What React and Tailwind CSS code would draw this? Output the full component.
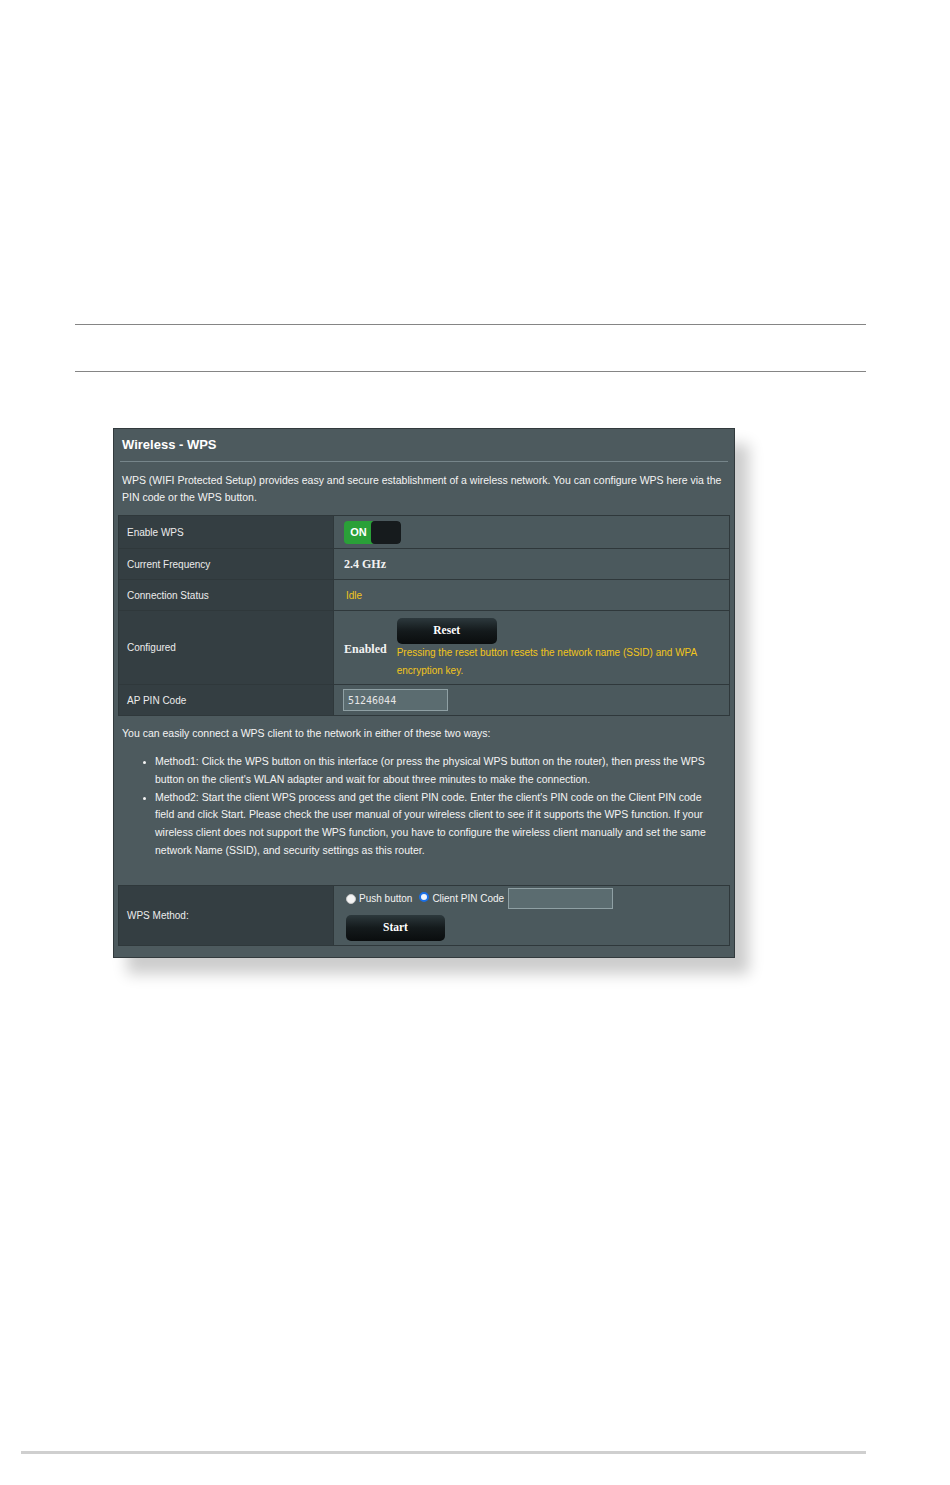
import React from 'react';

const serif = "font-['Liberation_Serif','Times_New_Roman',serif]";

function Row({ label, height, children }) {
  return (
    <div className="flex border-b border-[#2f383b] last:border-b-0" style={{ height }}>
      <div className="w-[214px] shrink-0 bg-[#343e42] pl-[8px] flex items-center text-[10px] text-[#ececec]">
        {label}
      </div>
      <div className="flex-1 bg-[#4b595d] border-l border-[#2f383b] pl-[10px] flex items-center">
        {children}
      </div>
    </div>
  );
}

function DarkButton({ children, className = '' }) {
  return (
    <div
      className={`h-[26px] rounded-[5px] bg-gradient-to-b from-[#2d393d] via-[#141a1c] to-[#0a0d0e] flex items-center justify-center text-white text-[11.5px] font-bold ${serif} ${className}`}
    >
      {children}
    </div>
  );
}

function Radio({ checked }) {
  return checked ? (
    <span className="inline-block w-[10px] h-[10px] rounded-full border-[2px] border-[#1a6fe6] bg-[#eef3fb]" />
  ) : (
    <span className="inline-block w-[10px] h-[10px] rounded-full bg-[#f4f4f4] border border-[#c8c8c8]" />
  );
}

export default function App() {
  return (
    <div className="w-[950px] h-[1485px] bg-white font-['Liberation_Sans',Arial,sans-serif] overflow-hidden">
      <div className="pt-[324px]">
        <div className="ml-[75px] w-[791px] h-px bg-[#858585]" />
        <div className="mt-[46px] ml-[75px] w-[791px] h-px bg-[#858585]" />
      </div>

      {/* WPS settings panel */}
      <div className="mt-[56px] ml-[113px] w-[622px] h-[530px] bg-[#4d5a5e] border border-[#323a3d] shadow-[14px_16px_14px_rgba(0,0,0,0.2)] flex flex-col">
        <div className="h-[32px] pl-[8px] flex items-center text-[13px] font-bold text-white">
          Wireless - WPS
        </div>
        <div className="mx-[6px] h-px bg-[#76858a]" />
        <p className="pt-[10px] pl-[8px] pr-[4px] text-[10.5px] leading-[17px] text-[#f4f4f4]">
          WPS (WIFI Protected Setup) provides easy and secure establishment of a wireless network. You can configure WPS here via the PIN code or the WPS button.
        </p>

        <div className="mt-[9px] mx-[4px] border border-[#2f383b]">
          <Row label="Enable WPS" height={33}>
            <div className="flex h-[23px] w-[57px] rounded-[4px] overflow-hidden">
              <div className="w-[29px] bg-[#2aa038] flex items-center justify-center text-white text-[11px] font-bold">
                ON
              </div>
              <div className="flex-1 bg-[#161b1d] rounded-[4px] -ml-[2px]" />
            </div>
          </Row>
          <Row label="Current Frequency" height={31}>
            <span className={`text-[12px] font-bold text-[#f2f2f2] ${serif}`}>2.4 GHz</span>
          </Row>
          <Row label="Connection Status" height={31}>
            <span className="pl-[2px] text-[10px] text-[#f2c51c]">Idle</span>
          </Row>
          <Row label="Configured" height={74}>
            <div className="flex items-center pt-[2px]">
              <span className={`text-[12px] font-bold text-[#f2f2f2] ${serif}`}>Enabled</span>
              <div className="ml-[10px] flex flex-col">
                <DarkButton className="w-[100px]">Reset</DarkButton>
                <p className="text-[10px] leading-[18px] text-[#f2c51c]">
                  Pressing the reset button resets the network name (SSID) and WPA
                  <br />
                  encryption key.
                </p>
              </div>
            </div>
          </Row>
          <Row label="AP PIN Code" height={30}>
            <div className="-ml-px w-[105px] h-[22px] bg-[#5b6c70] border border-[#8fa0a4] pl-[4px] flex items-center text-[10px] text-[#e6e6e6] font-['DejaVu_Sans_Mono',monospace]">
              51246044
            </div>
          </Row>
        </div>

        <p className="mt-[8px] px-[8px] text-[10.5px] leading-[18px] text-[#f4f4f4]">
          You can easily connect a WPS client to the network in either of these two ways:
        </p>
        <ul className="mt-[11px] pl-[41px] pr-[14px] list-disc marker:text-[9px] text-[10.5px] leading-[17.8px] text-[#f4f4f4]">
          <li>
            Method1: Click the WPS button on this interface (or press the physical WPS button on the router), then press the WPS button on the client's WLAN adapter and wait for about three minutes to make the connection.
          </li>
          <li>
            Method2: Start the client WPS process and get the client PIN code. Enter the client's PIN code on the Client PIN code field and click Start. Please check the user manual of your wireless client to see if it supports the WPS function. If your wireless client does not support the WPS function, you have to configure the wireless client manually and set the same network Name (SSID), and security settings as this router.
          </li>
        </ul>

        <div className="mt-[25px] mx-[4px] border border-[#2f383b]">
          <Row label="WPS Method:" height={59}>
            <div className="flex flex-col pl-[2px] -mt-[2px]">
              <div className="flex items-center h-[22px] text-[10px] text-[#f2f2f2]">
                <Radio />
                <span className="ml-[3px]">Push button</span>
                <span className="ml-[7px]"><Radio checked /></span>
                <span className="ml-[3px]">Client PIN Code</span>
                <div className="ml-[4px] w-[105px] h-[21px] bg-[#5b6c70] border border-[#8fa0a4]" />
              </div>
              <DarkButton className="mt-[5px] w-[99px]">Start</DarkButton>
            </div>
          </Row>
        </div>
      </div>

      <div className="mt-[493px] ml-[21px] w-[845px] h-[3px] bg-[#cfcfcf]" />
    </div>
  );
}
